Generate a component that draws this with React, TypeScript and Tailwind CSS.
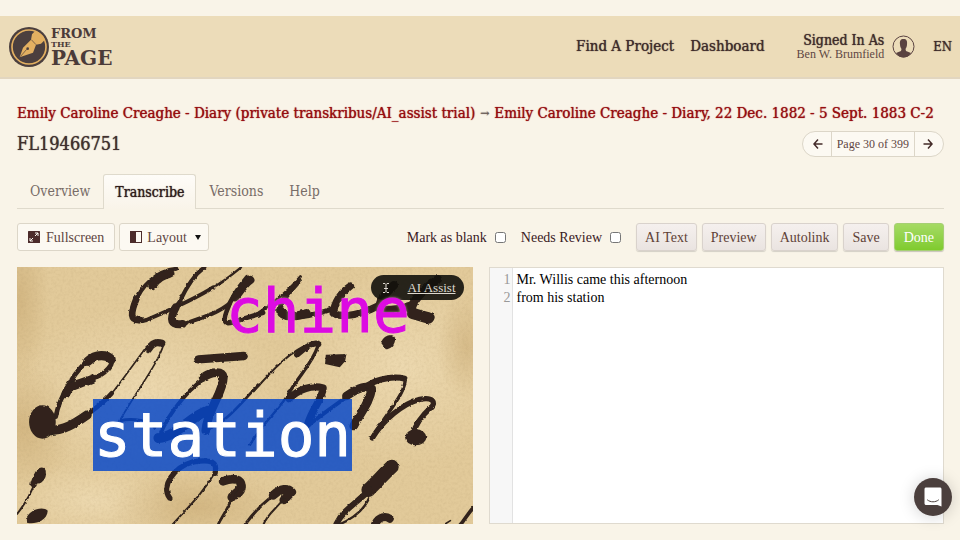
import React from 'react';

const slab = "font-['DejaVu_Serif_Condensed','DejaVu_Serif',serif]";

type Stroke = [number, string];

const ink: Stroke[] = [
  // first line of handwriting
  [12, 'M500 26 C440 32 392 80 376 130 C358 184 380 190 410 180 C480 150 560 115 610 82'],
  [20, 'M380 116 C362 160 360 182 392 180'],
  [24, 'M428 78 C445 52 465 46 482 40'],
  [7, 'M600 88 C640 66 670 42 694 22'],
  [12, 'M584 22 C548 48 528 85 510 125 C480 160 476 200 515 194 C580 172 625 160 660 130'],
  [24, 'M498 142 C478 180 484 196 518 192'],
  [14, 'M712 52 C690 78 662 120 652 150 C634 196 650 196 690 180 L760 158'],
  [24, 'M722 60 C700 76 688 100 676 112'],
  [9, 'M730 170 C790 130 842 90 872 50'],
  [16, 'M868 62 C838 96 796 140 812 160 C835 186 910 166 965 148'],
  [26, 'M812 152 C820 174 856 170 890 160'],
  [22, 'M1022 78 C990 100 974 130 970 160 C1005 176 1060 160 1100 140'],
  [26, 'M1152 76 C1120 106 1104 132 1112 150 C1150 152 1180 145 1200 138'],
  [26, 'M1284 58 C1250 80 1214 116 1206 142 C1204 166 1230 168 1262 172'],
  [34, 'M1208 160 L1256 174'],
  // second line
  [28, 'M90 506 C140 525 190 495 232 465'],
  [14, 'M220 472 C250 452 280 430 306 400'],
  [5, 'M290 420 C330 372 370 315 410 260'],
  [22, 'M416 268 C430 245 444 246 456 250'],
  [5, 'M462 252 C446 310 382 390 330 482'],
  [14, 'M138 470 C148 415 198 320 250 292 C288 278 316 290 304 314 C280 352 240 360 190 372'],
  [28, 'M234 304 C260 280 292 284 304 298'],
  [26, 'M168 402 C180 374 206 374 248 356'],
  [9, 'M330 482 C370 474 420 480 436 505'],
  [25, 'M566 298 L702 288'],
  [12, 'M448 530 C480 450 550 370 610 340'],
  [26, 'M580 352 C610 332 638 334 641 352 C640 400 592 450 588 512'],
  [30, 'M446 534 C500 530 540 470 592 452'],
  [8, 'M590 510 C650 490 700 420 748 374'],
  [6, 'M732 394 C780 340 840 270 902 252'],
  [18, 'M862 284 C890 258 912 246 926 252'],
  [10, 'M926 254 C904 320 862 350 832 410'],
  [7, 'M840 395 C810 450 756 490 720 556'],
  [22, 'M838 416 C868 388 906 374 940 384 C938 418 908 444 894 492'],
  [12, 'M890 500 C940 460 998 420 1040 390'],
  [26, 'M1010 408 C1050 380 1070 376 1086 386 C1080 430 1050 460 1032 498'],
  [18, 'M1074 376 C1104 356 1154 348 1184 356'],
  [10, 'M1186 356 C1190 398 1130 460 1086 534'],
  [16, 'M1088 534 C1120 480 1180 430 1230 418 C1270 410 1280 428 1264 442 C1240 464 1218 490 1210 522'],
  // third line
  [6, 'M22 762 C44 734 65 700 78 660'],
  [20, 'M72 672 C80 644 92 628 98 634 C102 650 94 655 88 660'],
  [16, 'M480 714 C452 680 492 622 548 606 C606 596 624 606 616 640'],
  [6, 'M616 636 C580 700 536 740 488 794'],
  [26, 'M640 664 C668 652 698 656 694 680 C686 700 668 704 666 712'],
  [8, 'M670 704 C660 740 640 762 624 796'],
  [20, 'M692 668 C704 680 696 694 688 702'],
  [9, 'M704 796 C738 750 780 708 820 692'],
  [26, 'M790 706 C812 684 836 684 846 696 L822 720'],
  [6, 'M824 714 C800 746 772 762 760 796'],
  [42, 'M1146 620 C1120 644 1098 670 1076 690'],
  [18, 'M1080 690 C1036 732 1000 750 980 792'],
  [7, 'M1078 714 C1062 752 1030 776 984 796'],
  [24, 'M1096 792 C1108 768 1128 768 1140 776'],
  [11, 'M1350 796 C1366 780 1372 762 1392 742'],
  [5, 'M1306 792 L1322 782'],
];

function Manuscript() {
  return (
    <svg
      className="absolute inset-0 h-full w-full"
      viewBox="21 21 1368 771"
      preserveAspectRatio="xMidYMid slice"
      role="img"
      aria-label="Handwritten diary page"
    >
      <defs>
        <radialGradient id="stain">
          <stop offset="0" stopColor="#b08a4c" stopOpacity="0.3" />
          <stop offset="1" stopColor="#b08a4c" stopOpacity="0" />
        </radialGradient>
        <radialGradient id="glow">
          <stop offset="0" stopColor="#efdcb4" stopOpacity="0.8" />
          <stop offset="1" stopColor="#efdcb4" stopOpacity="0" />
        </radialGradient>
        <filter id="paper" x="0" y="0" width="100%" height="100%">
          <feTurbulence type="fractalNoise" baseFrequency="0.12" numOctaves="3" seed="4" />
          <feColorMatrix values="0 0 0 0 0.42  0 0 0 0 0.3  0 0 0 0 0.14  0.9 0 0 0 -0.35" />
        </filter>
        <filter id="rough">
          <feTurbulence type="fractalNoise" baseFrequency="0.09" numOctaves="2" seed="8" />
          <feDisplacementMap in="SourceGraphic" scale="8" xChannelSelector="R" yChannelSelector="G" />
        </filter>
      </defs>
      <rect x="0" y="0" width="1410" height="820" fill="#e2ca9a" />
      <ellipse cx="400" cy="400" rx="420" ry="260" fill="url(#glow)" />
      <ellipse cx="1180" cy="320" rx="360" ry="300" fill="url(#glow)" />
      <ellipse cx="250" cy="720" rx="260" ry="120" fill="url(#glow)" />
      <ellipse cx="40" cy="500" rx="160" ry="190" fill="url(#stain)" />
      <ellipse cx="30" cy="120" rx="90" ry="260" fill="url(#stain)" />
      <ellipse cx="560" cy="740" rx="260" ry="110" fill="url(#stain)" />
      <ellipse cx="1370" cy="260" rx="90" ry="160" fill="url(#stain)" />
      <rect x="0" y="0" width="1410" height="820" filter="url(#paper)" opacity="0.35" />
      <g fill="none" stroke="#30241b" strokeLinecap="round" strokeLinejoin="round" filter="url(#rough)">
        {ink.map(([w, d]) => (
          <path key={d} d={d} strokeWidth={w} />
        ))}
        <g fill="#30241b" stroke="none">
          <ellipse cx="98" cy="486" rx="40" ry="50" />
          <ellipse cx="1218" cy="532" rx="32" ry="24" />
          <path d="M1114 248 C1120 226 1150 216 1156 234 C1158 256 1140 268 1128 268 Z" />
          <path d="M948 284 L1010 282 L1006 304 L990 322 L946 312 Z" />
          <path d="M48 780 C56 748 100 738 114 752 C112 784 72 794 52 788 Z" />
        </g>
      </g>
    </svg>
  );
}

function Logo() {
  return (
    <a href="#home" className="flex items-center text-[#4b3b39]" aria-label="From the Page">
      <svg className="size-10" viewBox="0 0 120 120" aria-hidden="true">
        <circle cx="60" cy="60" r="60" fill="#4b3f3e" />
        <circle cx="60" cy="60" r="51" fill="none" stroke="#e3b061" strokeWidth="5" />
        <path
          d="M32 91 L42 62 L66 38 L69 22 L79 11 C95 17 105 27 108 38 L96 50 L81 53 L72 77 Z"
          fill="#e3b061"
        />
        <path d="M34 89 L53 67" stroke="#4b3f3e" strokeWidth="2" />
        <circle cx="56" cy="65" r="4" fill="#4b3f3e" />
        <path d="M67 38 L81 53" stroke="#4b3f3e" strokeWidth="2" />
      </svg>
      <span className="ml-[2px] flex flex-col pt-px font-['DejaVu_Serif',serif] font-bold">
        <span className="text-[13px] leading-[12px]">FROM</span>
        <span className="text-[8px] leading-[9px]">THE</span>
        <span className="text-[20px] leading-[18px]">PAGE</span>
      </span>
    </a>
  );
}

function Header() {
  return (
    <header className={`flex h-[63px] items-center border-b-2 border-[#e2d6c0] bg-[#ecdcb9] pr-2 pl-[9px] text-[#3f2c2b] ${slab}`}>
      <Logo />
      <nav className="ml-auto flex items-center gap-4 text-[15px] text-shadow-[0_0_1px_currentColor]">
        <a href="#find">Find A Project</a>
        <a href="#dashboard">Dashboard</a>
      </nav>
      <a href="#account" className="ml-8 flex items-center gap-2">
        <span className="flex flex-col items-end">
          <span className="text-[14px] leading-[15px] text-shadow-[0_0_1px_currentColor]">Signed In As</span>
          <span className="font-['Liberation_Serif',serif] text-[12px] leading-[13px] text-[#5e4743]">Ben W. Brumfield</span>
        </span>
        <svg className="size-[23px]" viewBox="0 0 46 46" aria-hidden="true">
          <circle cx="23" cy="23" r="21" fill="none" stroke="#5a4341" strokeWidth="2" />
          <path
            d="M23 8 C17 8 15 12 16 19 C16 24 18 26 19 28 L18 32 L8 36 C12 42 17 45 23 45 C29 45 34 42 38 36 L28 32 L27 28 C28 26 30 24 30 19 C31 12 29 8 23 8 Z"
            fill="#5a4341"
          />
        </svg>
      </a>
      <button type="button" className="ml-[18px] text-[13px] text-shadow-[0_0_1px_currentColor]">EN</button>
    </header>
  );
}

function Arrow({ flip = false }: { flip?: boolean }) {
  return (
    <svg className={flip ? 'size-[10px] rotate-180' : 'size-[10px]'} viewBox="0 0 20 20" fill="none" stroke="#432b29" strokeWidth="3" aria-hidden="true">
      <path d="M19 10 H2 M10 1 L2 10 L10 19" />
    </svg>
  );
}

function Pager() {
  return (
    <nav aria-label="Pages" className="flex h-[26px] items-stretch rounded-full border border-[#dcd6c8] bg-[#fcf9f2] text-[12px] text-[#5f4643]">
      <a href="#previous" aria-label="Previous page" className="flex w-7 items-center justify-center pl-[2px]">
        <Arrow />
      </a>
      <span className="flex items-center border-x border-[#dcd6c8] px-[5px]">Page 30 of 399</span>
      <a href="#next" aria-label="Next page" className="flex w-7 items-center justify-center pr-[2px]">
        <Arrow flip />
      </a>
    </nav>
  );
}

function Tabs() {
  const tab = 'flex h-[34px] items-center px-[13px] text-[#786c67]';
  return (
    <nav className={`mt-[17px] flex border-b border-[#dfdacc] text-[14px] ${slab}`}>
      <a href="#overview" className={tab}>Overview</a>
      <a
        href="#transcribe"
        aria-current="page"
        className="-mb-px flex h-[35px] items-center rounded-t-[3px] border border-b-0 border-[#dfdacc] bg-linear-to-b from-[#fefcf8] to-[#f9f4e9] px-[11px] text-[#2f1c1b] text-shadow-[0_0_1px_currentColor]"
      >
        Transcribe
      </a>
      <a href="#versions" className={tab}>Versions</a>
      <a href="#help" className={tab}>Help</a>
    </nav>
  );
}

const plain = 'flex h-[28px] items-center rounded-[3px] border border-[#dcd6c8] bg-[#fcf9f2] text-[#5f4643]';
const action =
  'h-[28px] rounded-[3px] border border-[#d9d2cc] bg-linear-to-b from-[#f5f0ee] to-[#eae4e1] px-2 text-[#5f4237] shadow-[0_1px_1px_rgba(0,0,0,0.15)]';

function Toolbar() {
  return (
    <div className="mt-[14px] flex items-center text-[14px] text-[#39201f]">
      <button type="button" className={`${plain} gap-[6px] px-[10px]`}>
        <svg className="size-3" viewBox="0 0 24 24" aria-hidden="true">
          <rect width="24" height="24" rx="1" fill="#4c2c2b" />
          <path d="M14 4 H20 V10 M20 4 L14 10 M10 20 H4 V14 M4 20 L10 14" fill="none" stroke="#fcf9f2" strokeWidth="2" />
        </svg>
        Fullscreen
      </button>
      <div className={`${plain} relative ml-1`}>
        <svg className="absolute left-[10px] size-3" viewBox="0 0 24 24" aria-hidden="true">
          <rect x="1" y="1" width="22" height="22" fill="none" stroke="#4c2c2b" strokeWidth="2" />
          <rect width="12" height="24" fill="#4c2c2b" />
        </svg>
        <select aria-label="Layout" className="h-full w-[88px] appearance-none bg-transparent pl-[27px]">
          <option>Layout</option>
        </select>
        <svg className="pointer-events-none absolute right-[7px] h-[5px] w-[6px]" viewBox="0 0 12 10" aria-hidden="true">
          <path d="M0 0 H12 L6 10 Z" fill="#111" />
        </svg>
      </div>
      <label className="ml-auto flex items-center gap-2">
        Mark as blank
        <input type="checkbox" className="mt-px size-[11px]" />
      </label>
      <label className="ml-[15px] flex items-center gap-2">
        Needs Review
        <input type="checkbox" className="mt-px size-[11px]" />
      </label>
      <div className="ml-[15px] flex gap-[5px]">
        <button type="button" className={action}>AI Text</button>
        <button type="button" className={action}>Preview</button>
        <button type="button" className={action}>Autolink</button>
        <button type="button" className={action}>Save</button>
        <button
          type="button"
          className="h-[28px] rounded-[3px] border border-[#a6cf74] bg-linear-to-b from-[#a5da63] to-[#7fcb2c] px-[9px] text-white shadow-[0_1px_1px_rgba(0,0,0,0.2)]"
        >
          Done
        </button>
      </div>
    </div>
  );
}

function ImagePanel() {
  const word = "absolute font-['DejaVu_Sans_Mono',monospace] text-[61px] leading-[72px] [-webkit-text-stroke:1px_currentColor]";
  return (
    <section className="relative overflow-hidden" aria-label="Page image">
      <Manuscript />
      <div className="absolute top-2 right-[9px] flex h-[25px] items-center gap-4 rounded-full bg-[#12110c]/90 pr-2 pl-[10px] text-[13px] text-[#ddd8cf]">
        <svg className="size-[10px]" viewBox="0 0 20 20" fill="none" stroke="#ddd8cf" strokeWidth="2" aria-hidden="true">
          <path d="M4 1 H8 L10 3 L12 1 H16 M10 3 V17 M4 19 H8 L10 17 L12 19 H16 M6 11 H14" />
        </svg>
        <a href="#ai-assist" className="underline">AI Assist</a>
      </div>
      <span className={`${word} top-[8px] left-[209px] text-[#dc0be2] text-shadow-[0_0_3px_rgba(240,225,200,0.9)]`}>chine</span>
      <span className={`${word} top-[132px] left-[76px] bg-[#0345cb]/82 px-px text-white`}>station</span>
    </section>
  );
}

function Editor() {
  return (
    <section className="flex border border-[#dfdacf] bg-white text-[14px] leading-[18px]" aria-label="Transcription">
      <div className="w-[23px] border-r border-[#e2e2e2] bg-[#f7f7f7] pt-[3px] pr-px text-right text-[#999]" aria-hidden="true">
        <div>1</div>
        <div>2</div>
      </div>
      <textarea
        aria-label="Transcription text"
        className="min-w-0 flex-1 resize-none px-1 pt-[3px] text-black outline-none"
        defaultValue={'Mr. Willis came this afternoon\nfrom his station'}
      />
    </section>
  );
}

export default function App() {
  return (
    <div className="flex min-h-screen flex-col bg-[#f9f4e8] py-4 font-['Liberation_Serif','Times_New_Roman',serif]">
      <Header />
      <main className="flex flex-1 flex-col pr-4 pl-[17px]">
        <div className={`mt-6 flex items-center whitespace-nowrap text-[15px] leading-[20px] text-[#970d10] text-shadow-[0_0_1px_currentColor] ${slab}`}>
          <a href="#collection">Emily Caroline Creaghe - Diary (private transkribus/AI_assist trial)</a>
          <span className="mx-[5px] text-[12px] text-[#6b5d58]">→</span>
          <a href="#work">Emily Caroline Creaghe - Diary, 22 Dec. 1882 - 5 Sept. 1883 C-2</a>
        </div>
        <div className="mt-2 flex items-center justify-between">
          <h1 className={`text-[18px] leading-[26px] text-[#40302e] text-shadow-[0_0_1px_currentColor] ${slab}`}>FL19466751</h1>
          <Pager />
        </div>
        <Tabs />
        <Toolbar />
        <div className="mt-4 grid flex-1 grid-cols-2 gap-4">
          <ImagePanel />
          <Editor />
        </div>
      </main>
      <button
        type="button"
        aria-label="Open chat"
        className="fixed right-2 bottom-6 flex size-[38px] items-center justify-center rounded-full bg-[#4b3f3d] shadow-[0_1px_16px_rgba(0,0,0,0.18)]"
      >
        <svg className="h-[20px] w-[18px]" viewBox="0 0 36 40" aria-hidden="true">
          <path d="M5 1 H31 C34 1 35 2 35 5 V39 L27 36 H5 C2 36 1 35 1 32 V5 C1 2 2 1 5 1 Z" fill="#fff" />
          <path d="M7 26 C13 31 23 31 29 26" fill="none" stroke="#4b3f3d" strokeWidth="2" strokeLinecap="round" />
        </svg>
      </button>
    </div>
  );
}
